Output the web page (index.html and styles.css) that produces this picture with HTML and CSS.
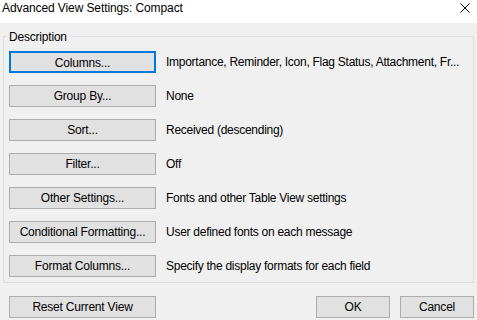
FILE: index.html
```html
<!DOCTYPE html>
<html>
<head>
<meta charset="utf-8">
<link rel="stylesheet" href="styles.css">
</head>
<body>
<div class="window">
  <div class="titlebar">
    <span class="title">Advanced View Settings: Compact</span>
    <svg class="close" width="10" height="10" viewBox="0 0 10 10"><path d="M0.5 0.5 L9.5 9.5 M9.5 0.5 L0.5 9.5" stroke="#000" stroke-width="1" fill="none"/></svg>
  </div>
  <div class="content">
    <div class="group">
      <div class="legend">Description</div>
      <div class="rows">
        <div class="row"><button class="btn wide focus">Columns...</button><span class="desc">Importance, Reminder, Icon, Flag Status, Attachment, Fr...</span></div>
        <div class="row"><button class="btn wide">Group By...</button><span class="desc">None</span></div>
        <div class="row"><button class="btn wide">Sort...</button><span class="desc">Received (descending)</span></div>
        <div class="row"><button class="btn wide">Filter...</button><span class="desc">Off</span></div>
        <div class="row"><button class="btn wide">Other Settings...</button><span class="desc">Fonts and other Table View settings</span></div>
        <div class="row"><button class="btn wide">Conditional Formatting...</button><span class="desc">User defined fonts on each message</span></div>
        <div class="row"><button class="btn wide">Format Columns...</button><span class="desc">Specify the display formats for each field</span></div>
      </div>
    </div>
    <div class="footer">
      <button class="btn wide">Reset Current View</button>
      <div class="spacer"></div>
      <button class="btn small">OK</button>
      <button class="btn small">Cancel</button>
    </div>
  </div>
</div>
</body>
</html>
```
FILE: styles.css
```css
html, body {
  margin: 0;
  padding: 0;
  background: #f0f0f0;
}
body {
  width: 477px;
  height: 320px;
  overflow: hidden;
  font-family: "Liberation Sans", Arial, sans-serif;
  font-size: 12px;
  letter-spacing: -0.2px;
  color: #000;
}
.window {
  display: flex;
  flex-direction: column;
  height: 320px;
}
.titlebar {
  height: 23px;
  background: #fff;
  display: flex;
  align-items: flex-start;
  justify-content: space-between;
  padding: 0 7px 0 2px;
  box-sizing: border-box;
}
.title {
  line-height: 16px;
  letter-spacing: -0.1px;
}
.close {
  margin-top: 3px;
}
.content {
  padding: 13px 3px 0 3px;
  display: flex;
  flex-direction: column;
}
.group {
  border: 1px solid #dcdcdc;
  display: flex;
  flex-direction: column;
  align-items: flex-start;
  padding: 0 0 5px 5px;
}
.legend {
  margin: -8px 0 0 -3px;
  padding: 0 3px;
  line-height: 16px;
  background: #f0f0f0;
}
.rows {
  margin-top: 6px;
  display: flex;
  flex-direction: column;
  gap: 12px;
}
.row {
  display: flex;
  align-items: center;
  gap: 10px;
}
.desc {
  line-height: 16px;
  white-space: nowrap;
  letter-spacing: -0.27px;
}
.btn {
  box-sizing: border-box;
  height: 22px;
  margin: 0;
  padding: 0;
  background: #e1e1e1;
  border: 1px solid #adadad;
  font-family: inherit;
  font-size: 12px;
  letter-spacing: -0.2px;
  color: #000;
  line-height: 20px;
  text-align: center;
}
.btn.wide {
  width: 147px;
}
.btn.small {
  width: 74px;
}
.btn.focus {
  border: 2px solid #0078d7;
}
.footer {
  margin-top: 13px;
  padding-left: 6px;
  display: flex;
  gap: 10px;
}
.spacer {
  flex: 1;
}
```
